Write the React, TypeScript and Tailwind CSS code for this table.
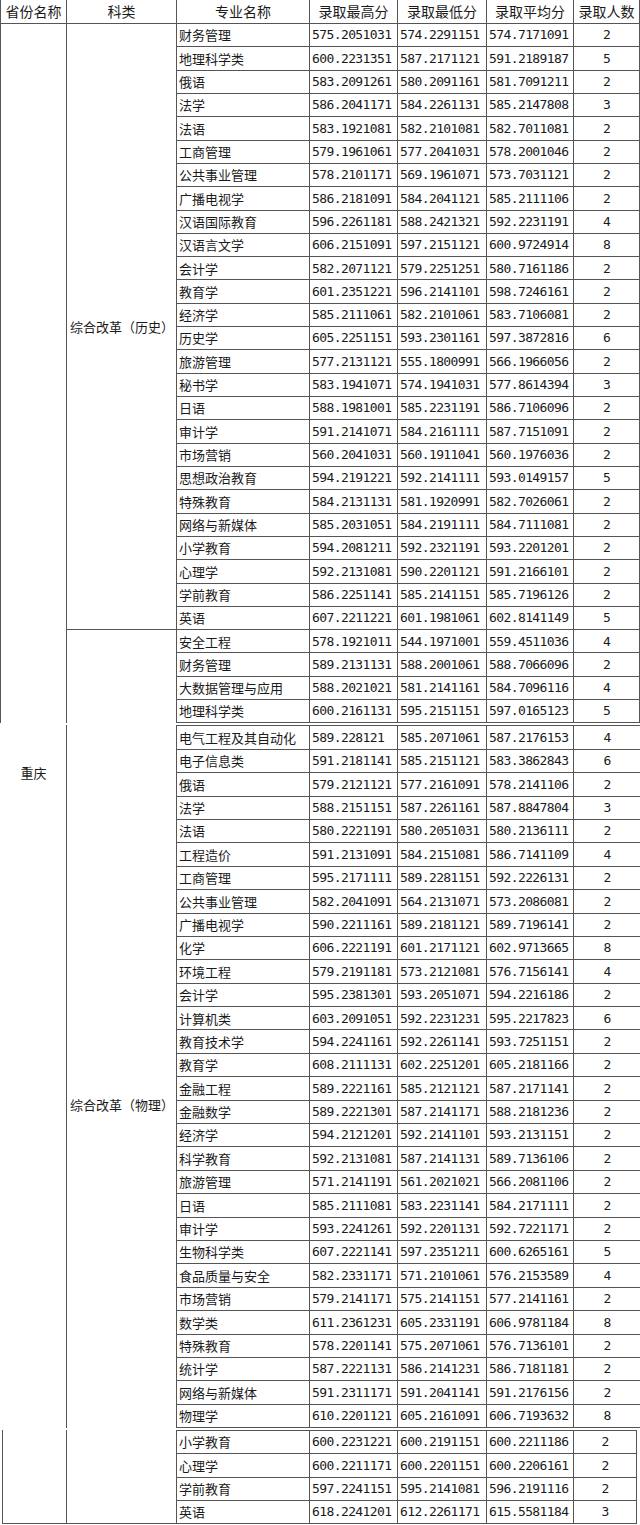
import React from 'react';

type Row = [string, string, string, string, string];

const history: Row[] = [
  ['财务管理', '575.2051031', '574.2291151', '574.7171091', '2'],
  ['地理科学类', '600.2231351', '587.2171121', '591.2189187', '5'],
  ['俄语', '583.2091261', '580.2091161', '581.7091211', '2'],
  ['法学', '586.2041171', '584.2261131', '585.2147808', '3'],
  ['法语', '583.1921081', '582.2101081', '582.7011081', '2'],
  ['工商管理', '579.1961061', '577.2041031', '578.2001046', '2'],
  ['公共事业管理', '578.2101171', '569.1961071', '573.7031121', '2'],
  ['广播电视学', '586.2181091', '584.2041121', '585.2111106', '2'],
  ['汉语国际教育', '596.2261181', '588.2421321', '592.2231191', '4'],
  ['汉语言文学', '606.2151091', '597.2151121', '600.9724914', '8'],
  ['会计学', '582.2071121', '579.2251251', '580.7161186', '2'],
  ['教育学', '601.2351221', '596.2141101', '598.7246161', '2'],
  ['经济学', '585.2111061', '582.2101061', '583.7106081', '2'],
  ['历史学', '605.2251151', '593.2301161', '597.3872816', '6'],
  ['旅游管理', '577.2131121', '555.1800991', '566.1966056', '2'],
  ['秘书学', '583.1941071', '574.1941031', '577.8614394', '3'],
  ['日语', '588.1981001', '585.2231191', '586.7106096', '2'],
  ['审计学', '591.2141071', '584.2161111', '587.7151091', '2'],
  ['市场营销', '560.2041031', '560.1911041', '560.1976036', '2'],
  ['思想政治教育', '594.2191221', '592.2141111', '593.0149157', '5'],
  ['特殊教育', '584.2131131', '581.1920991', '582.7026061', '2'],
  ['网络与新媒体', '585.2031051', '584.2191111', '584.7111081', '2'],
  ['小学教育', '594.2081211', '592.2321191', '593.2201201', '2'],
  ['心理学', '592.2131081', '590.2201121', '591.2166101', '2'],
  ['学前教育', '586.2251141', '585.2141151', '585.7196126', '2'],
  ['英语', '607.2211221', '601.1981061', '602.8141149', '5'],
];

const physicsA: Row[] = [
  ['安全工程', '578.1921011', '544.1971001', '559.4511036', '4'],
  ['财务管理', '589.2131131', '588.2001061', '588.7066096', '2'],
  ['大数据管理与应用', '588.2021021', '581.2141161', '584.7096116', '4'],
  ['地理科学类', '600.2161131', '595.2151151', '597.0165123', '5'],
];

const physicsB: Row[] = [
  ['电气工程及其自动化', '589.228121', '585.2071061', '587.2176153', '4'],
  ['电子信息类', '591.2181141', '585.2151121', '583.3862843', '6'],
  ['俄语', '579.2121121', '577.2161091', '578.2141106', '2'],
  ['法学', '588.2151151', '587.2261161', '587.8847804', '3'],
  ['法语', '580.2221191', '580.2051031', '580.2136111', '2'],
  ['工程造价', '591.2131091', '584.2151081', '586.7141109', '4'],
  ['工商管理', '595.2171111', '589.2281151', '592.2226131', '2'],
  ['公共事业管理', '582.2041091', '564.2131071', '573.2086081', '2'],
  ['广播电视学', '590.2211161', '589.2181121', '589.7196141', '2'],
  ['化学', '606.2221191', '601.2171121', '602.9713665', '8'],
  ['环境工程', '579.2191181', '573.2121081', '576.7156141', '4'],
  ['会计学', '595.2381301', '593.2051071', '594.2216186', '2'],
  ['计算机类', '603.2091051', '592.2231231', '595.2217823', '6'],
  ['教育技术学', '594.2241161', '592.2261141', '593.7251151', '2'],
  ['教育学', '608.2111131', '602.2251201', '605.2181166', '2'],
  ['金融工程', '589.2221161', '585.2121121', '587.2171141', '2'],
  ['金融数学', '589.2221301', '587.2141171', '588.2181236', '2'],
  ['经济学', '594.2121201', '592.2141101', '593.2131151', '2'],
  ['科学教育', '592.2131081', '587.2141131', '589.7136106', '2'],
  ['旅游管理', '571.2141191', '561.2021021', '566.2081106', '2'],
  ['日语', '585.2111081', '583.2231141', '584.2171111', '2'],
  ['审计学', '593.2241261', '592.2201131', '592.7221171', '2'],
  ['生物科学类', '607.2221141', '597.2351211', '600.6265161', '5'],
  ['食品质量与安全', '582.2331171', '571.2101061', '576.2153589', '4'],
  ['市场营销', '579.2141171', '575.2141151', '577.2141161', '2'],
  ['数学类', '611.2361231', '605.2331191', '606.9781184', '8'],
  ['特殊教育', '578.2201141', '575.2071061', '576.7136101', '2'],
  ['统计学', '587.2221131', '586.2141231', '586.7181181', '2'],
  ['网络与新媒体', '591.2311171', '591.2041141', '591.2176156', '2'],
  ['物理学', '610.2201121', '605.2161091', '606.7193632', '8'],
];

const physicsC: Row[] = [
  ['小学教育', '600.2231221', '600.2191151', '600.2211186', '2'],
  ['心理学', '600.2211171', '600.2201151', '600.2206161', '2'],
  ['学前教育', '597.2241151', '595.2141081', '596.2191116', '2'],
  ['英语', '618.2241201', '612.2261171', '615.5581184', '3'],
];

const cjk = "font-['Noto_Sans_CJK_SC','Noto_Sans',sans-serif] text-[13px] text-[#1a1a1a]";
const mono = "font-['DejaVu_Sans_Mono','Liberation_Mono',monospace] text-[13px] tracking-[-0.6px] text-[#1a1a1a]";

// one data row: name, three scores, count. `top` adds the top rule of a cut segment,
// `open` drops the right rule on the last column
function Cells({ r, top, open }: { r: Row; top?: boolean; open?: boolean }) {
  const b = `border-b border-[#555] ${top ? 'border-t' : ''}`;
  return (
    <>
      <div className={`${b} border-r flex items-center pl-[2px] whitespace-nowrap ${cjk}`}>{r[0]}</div>
      <div className={`${b} border-r flex items-center pl-[2px] ${mono}`}>{r[1]}</div>
      <div className={`${b} border-r flex items-center pl-[2px] ${mono}`}>{r[2]}</div>
      <div className={`${b} border-r flex items-center pl-[2px] ${mono}`}>{r[3]}</div>
      <div className={`${b} ${open ? '' : 'border-r'} flex items-center justify-center ${mono}`}>{r[4]}</div>
    </>
  );
}

const headers = ['省份名称', '科类', '专业名称', '录取最高分', '录取最低分', '录取平均分', '录取人数'];

export default function App() {
  return (
    <div className="w-[640px] h-[1525px] bg-white overflow-hidden">
      {/* first capture: header, history block, start of physics block */}
      <div className="grid grid-cols-[66px_110px_133px_88px_89px_87px_66px] grid-rows-[24px_repeat(30,23.32px)] border-l border-[#555]">
        {headers.map((h) => (
          <div
            key={h}
            className="border-r border-b border-[#555] flex items-center justify-center font-['Noto_Sans_CJK_SC',sans-serif] text-[14px] text-[#1a1a1a] whitespace-nowrap"
          >
            {h}
          </div>
        ))}
        <div className="col-start-1 row-start-2 row-span-30 border-r border-[#555]" />
        <div className={`col-start-2 row-start-2 row-span-26 border-r border-b border-[#555] flex items-center pl-[3px] ${cjk}`}>
          综合改革（历史）
        </div>
        <div className="col-start-2 row-start-28 row-span-4 border-r border-[#555]" />
        {[...history, ...physicsA].map((r, i) => (
          <Cells key={i} r={r} />
        ))}
      </div>

      {/* second capture */}
      <div className="mt-[2px] pl-px grid grid-cols-[66px_110px_133px_88px_89px_87px_66px] grid-rows-[24.4px_repeat(29,23.4px)]">
        <div className="col-start-1 row-start-1 row-span-30 border-r border-[#555] flex justify-center pt-[40px]">
          <span className={`leading-4 ${cjk}`}>重庆</span>
        </div>
        <div className={`col-start-2 row-start-1 row-span-30 border-r border-[#555] flex items-center pl-[3px] pt-[56px] ${cjk}`}>
          综合改革（物理）
        </div>
        {physicsB.map((r, i) => (
          <Cells key={i} r={r} top={i === 0} open />
        ))}
      </div>

      {/* third capture */}
      <div className="mt-[2px] ml-[2px] w-[635px] grid grid-cols-[64px_110px_133px_88px_89px_87px_63px] grid-rows-[24.25px_repeat(3,23.25px)] border-l border-[#555]">
        <div className="col-start-1 row-start-1 row-span-4 border-r border-b border-[#555]" />
        <div className="col-start-2 row-start-1 row-span-4 border-r border-b border-[#555]" />
        {physicsC.map((r, i) => (
          <Cells key={i} r={r} top={i === 0} />
        ))}
      </div>
    </div>
  );
}
